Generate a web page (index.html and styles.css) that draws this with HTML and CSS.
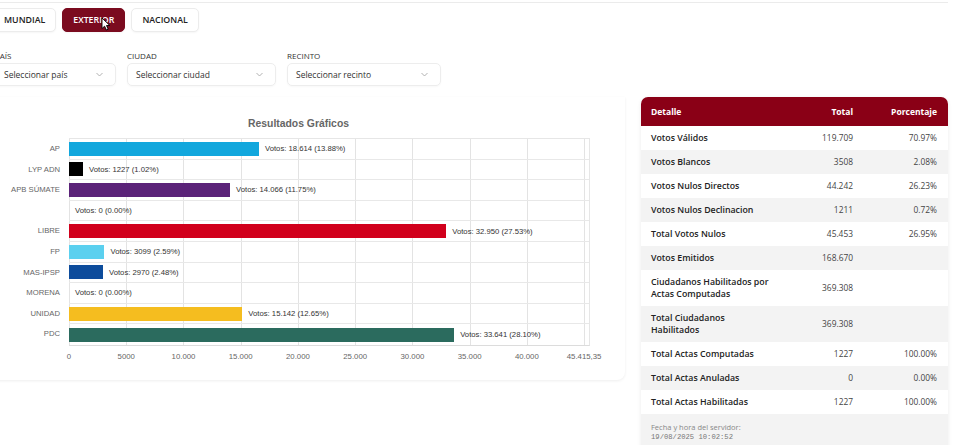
FILE: index.html
```html
<!DOCTYPE html>
<html lang="es">
<head>
    <meta charset="UTF-8">
    <title>Resultados</title>
    <link rel="stylesheet" href="styles.css">
</head>
<body>
<div class="page">
    <div class="topline"></div>

    <div class="tabs">
        <button class="tab">MUNDIAL</button>
        <button class="tab active">EXTERIOR
            <svg class="cursor" width="10" height="14" viewBox="0 0 10 14">
                <path d="M1 1 L1 11.5 L3.6 9.2 L5.4 13 L7.2 12.2 L5.5 8.5 L8.8 8.5 Z" fill="#fff" stroke="#000" stroke-width="0.9" stroke-linejoin="round"/>
            </svg>
        </button>
        <button class="tab">NACIONAL</button>
    </div>

    <div class="filters">
        <div class="filter">
            <label>PAÍS</label>
            <div class="select select-pais">Seleccionar país
                <svg class="chevron" width="7" height="5" viewBox="0 0 7 5"><path d="M0.5 1 L3.5 4 L6.5 1" fill="none" stroke="#a9a9a9" stroke-width="0.9"/></svg>
            </div>
        </div>
        <div class="filter">
            <label>CIUDAD</label>
            <div class="select select-ciudad">Seleccionar ciudad
                <svg class="chevron" width="7" height="5" viewBox="0 0 7 5"><path d="M0.5 1 L3.5 4 L6.5 1" fill="none" stroke="#a9a9a9" stroke-width="0.9"/></svg>
            </div>
        </div>
        <div class="filter">
            <label>RECINTO</label>
            <div class="select select-recinto">Seleccionar recinto
                <svg class="chevron" width="7" height="5" viewBox="0 0 7 5"><path d="M0.5 1 L3.5 4 L6.5 1" fill="none" stroke="#a9a9a9" stroke-width="0.9"/></svg>
            </div>
        </div>
    </div>

    <div class="main">
        <section class="chart-card">
            <h2 class="chart-title">Resultados Gráficos</h2>
            <div class="chart">
                <div class="cats">
                    <div>AP</div>
                    <div>LYP ADN</div>
                    <div>APB SÚMATE</div>
                    <div></div>
                    <div>LIBRE</div>
                    <div>FP</div>
                    <div>MAS-IPSP</div>
                    <div>MORENA</div>
                    <div>UNIDAD</div>
                    <div>PDC</div>
                </div>
                <div class="plot">
                    <div class="row"><span class="bar ap" style="width:36.54%"></span><span class="val">Votos: 18.614 (13.88%)</span></div>
                    <div class="row"><span class="bar lyp" style="width:2.70%"></span><span class="val">Votos: 1227 (1.02%)</span></div>
                    <div class="row"><span class="bar apb" style="width:30.97%"></span><span class="val">Votos: 14.066 (11.75%)</span></div>
                    <div class="row"><span class="bar" style="width:0"></span><span class="val">Votos: 0 (0.00%)</span></div>
                    <div class="row"><span class="bar libre" style="width:72.55%"></span><span class="val">Votos: 32.950 (27.53%)</span></div>
                    <div class="row"><span class="bar fp" style="width:6.82%"></span><span class="val">Votos: 3099 (2.59%)</span></div>
                    <div class="row"><span class="bar mas" style="width:6.54%"></span><span class="val">Votos: 2970 (2.48%)</span></div>
                    <div class="row"><span class="bar" style="width:0"></span><span class="val">Votos: 0 (0.00%)</span></div>
                    <div class="row"><span class="bar unidad" style="width:33.34%"></span><span class="val">Votos: 15.142 (12.65%)</span></div>
                    <div class="row"><span class="bar pdc" style="width:74.07%"></span><span class="val">Votos: 33.641 (28.10%)</span></div>
                </div>
                <div class="ticks">
                    <div class="tick"><span>0</span></div>
                    <div class="tick"><span>5000</span></div>
                    <div class="tick"><span>10.000</span></div>
                    <div class="tick"><span>15.000</span></div>
                    <div class="tick"><span>20.000</span></div>
                    <div class="tick"><span>25.000</span></div>
                    <div class="tick"><span>30.000</span></div>
                    <div class="tick"><span>35.000</span></div>
                    <div class="tick"><span>40.000</span></div>
                    <div class="tick last"><span>45.415,35</span></div>
                </div>
            </div>
        </section>

        <section class="summary">
            <table>
                <colgroup>
                    <col class="col-detail">
                    <col class="col-total">
                    <col class="col-pct">
                </colgroup>
                <thead>
                    <tr><th>Detalle</th><th>Total</th><th>Porcentaje</th></tr>
                </thead>
                <tbody>
                    <tr><td>Votos Válidos</td><td>119.709</td><td>70.97%</td></tr>
                    <tr><td>Votos Blancos</td><td>3508</td><td>2.08%</td></tr>
                    <tr><td>Votos Nulos Directos</td><td>44.242</td><td>26.23%</td></tr>
                    <tr><td>Votos Nulos Declinacion</td><td>1211</td><td>0.72%</td></tr>
                    <tr><td>Total Votos Nulos</td><td>45.453</td><td>26.95%</td></tr>
                    <tr><td>Votos Emitidos</td><td>168.670</td><td></td></tr>
                    <tr><td>Ciudadanos Habilitados por Actas Computadas</td><td>369.308</td><td></td></tr>
                    <tr><td>Total Ciudadanos Habilitados</td><td>369.308</td><td></td></tr>
                    <tr><td>Total Actas Computadas</td><td>1227</td><td>100.00%</td></tr>
                    <tr><td>Total Actas Anuladas</td><td>0</td><td>0.00%</td></tr>
                    <tr><td>Total Actas Habilitadas</td><td>1227</td><td>100.00%</td></tr>
                </tbody>
            </table>
            <div class="server-time">
                <p>Fecha y hora del servidor:</p>
                <code>19/08/2025 10:02:52</code>
            </div>
        </section>
    </div>
</div>
</body>
</html>
```
FILE: styles.css
```css
body {
    margin: 0;
    font-family: "Open Sans", "Noto Sans", sans-serif;
    color: #222;
    background: #fff;
    overflow: hidden;
}

.page {
    margin-left: -8px;
    width: 956px;
}

.topline {
    height: 2px;
    border-bottom: 1px solid #ebebeb;
}

/* tabs */
.tabs {
    display: flex;
    gap: 6px;
    margin: 5px 0 0 1px;
}

.tab {
    height: 24px;
    padding: 0 10px;
    border: 1px solid #ececec;
    border-radius: 5px;
    background: #fff;
    font-family: "Open Sans", sans-serif;
    font-weight: 600;
    font-size: 8.8px;
    color: #222;
    box-shadow: 0 1px 2px rgba(0, 0, 0, 0.04);
    cursor: pointer;
}

.tab.active {
    position: relative;
    background: #7b0b1f;
    border-color: #7b0b1f;
    color: #fff;
}

.cursor {
    position: absolute;
    left: 38px;
    top: 8px;
}

/* filters */
.filters {
    display: flex;
    gap: 11px;
    margin: 18px 0 0 3px;
}

.filter label {
    display: block;
    font-size: 8px;
    line-height: 11px;
    margin-bottom: 2px;
    color: #333;
}

.select {
    height: 23px;
    box-sizing: border-box;
    display: flex;
    align-items: center;
    justify-content: space-between;
    padding: 0 12px 0 8px;
    border: 1px solid #ededed;
    border-radius: 5px;
    font-size: 8.5px;
    color: #333;
    box-shadow: 0 1px 2px rgba(0, 0, 0, 0.03);
}

.select-pais { width: 121px; }
.select-ciudad { width: 149px; }
.select-recinto { width: 154px; }

/* main row */
.main {
    display: flex;
    align-items: flex-start;
    gap: 16px;
    margin-top: 11px;
}

.chart-card {
    width: 633px;
    box-sizing: border-box;
    padding: 20px 0 18px;
    border-radius: 0 0 8px 0;
    box-shadow: 0 1px 3px rgba(0, 0, 0, 0.07);
}

.chart-title {
    margin: 0 0 7px;
    padding-right: 20px;
    text-align: center;
    font-family: "Liberation Sans", Arial, sans-serif;
    font-weight: bold;
    font-size: 10.4px;
    line-height: 14px;
    color: #666;
}

.chart {
    display: grid;
    grid-template-columns: 77px 521px;
    font-family: "Liberation Sans", Arial, sans-serif;
}

.cats {
    padding-top: 1px;
}

.cats div {
    height: 20.6px;
    line-height: 20.6px;
    padding-right: 9px;
    text-align: right;
    font-size: 7.7px;
    color: #666;
}

.plot {
    width: 520px;
    border-top: 1px solid #e6e6e6;
    border-right: 1px solid #e6e6e6;
    border-bottom: 1px solid #dcdcdc;
    background: repeating-linear-gradient(to right, #e3e3e3 0, #e3e3e3 1px, transparent 1px, transparent 11.0095%);
}

.row {
    display: flex;
    align-items: center;
    height: 20.6px;
    box-sizing: border-box;
    border-bottom: 1px solid #e8e8e8;
}

.row:last-child {
    border-bottom: 0;
}

.bar {
    flex: none;
    height: 14px;
    box-sizing: border-box;
}

.bar.ap { background: #12a7dd; }
.bar.lyp { background: #000; }
.bar.apb { background: #5b2379; }
.bar.libre { background: #d1001c; }
.bar.fp { background: #5bd0ef; }
.bar.mas { background: #0d4c9c; }
.bar.unidad { background: #f5bd1f; }
.bar.pdc { background: #2b6b5e; }

.val {
    margin-left: 6px;
    white-space: nowrap;
    font-size: 7.7px;
    color: #333;
}

.ticks {
    grid-column: 2;
    width: 520px;
    display: flex;
    padding-top: 6px;
    font-size: 7.8px;
    line-height: 10px;
    color: #666;
}

.tick {
    flex: 0 0 11.0095%;
}

.tick span {
    display: inline-block;
    transform: translateX(-50%);
    white-space: nowrap;
}

.tick.last {
    flex: 0 0 0;
    margin-left: auto;
}

/* summary table */
.summary {
    width: 307px;
    border-radius: 7px 7px 0 0;
    overflow: hidden;
    box-shadow: 0 1px 4px rgba(0, 0, 0, 0.08);
}

.summary table {
    width: 100%;
    border-collapse: collapse;
    table-layout: fixed;
}

.col-detail { width: 140px; }
.col-total { width: 82px; }
.col-pct { width: 85px; }

.summary th {
    height: 29px;
    box-sizing: border-box;
    padding: 0 10px;
    background: #8a0016;
    color: #fff;
    font-weight: 700;
    font-size: 8.5px;
    line-height: 12px;
    text-align: right;
}

.summary td {
    padding: 6px 10px;
    line-height: 12px;
    font-size: 8.4px;
    color: #444;
    text-align: right;
}

.summary th:first-child,
.summary td:first-child {
    text-align: left;
}

.summary th:last-child,
.summary td:last-child {
    padding-right: 11px;
}

.summary td:first-child {
    font-weight: 600;
    font-size: 8.8px;
    color: #222;
}

.summary tbody tr:nth-child(even) td {
    background: #f3f3f3;
}

.server-time {
    padding: 8px 10px 12px;
    background: #f3f3f3;
}

.server-time p {
    margin: 0;
    font-size: 7.5px;
    line-height: 10px;
    color: #888;
}

.server-time code {
    display: block;
    font-family: "Liberation Mono", monospace;
    font-size: 7.2px;
    line-height: 10px;
    color: #777;
}
```
